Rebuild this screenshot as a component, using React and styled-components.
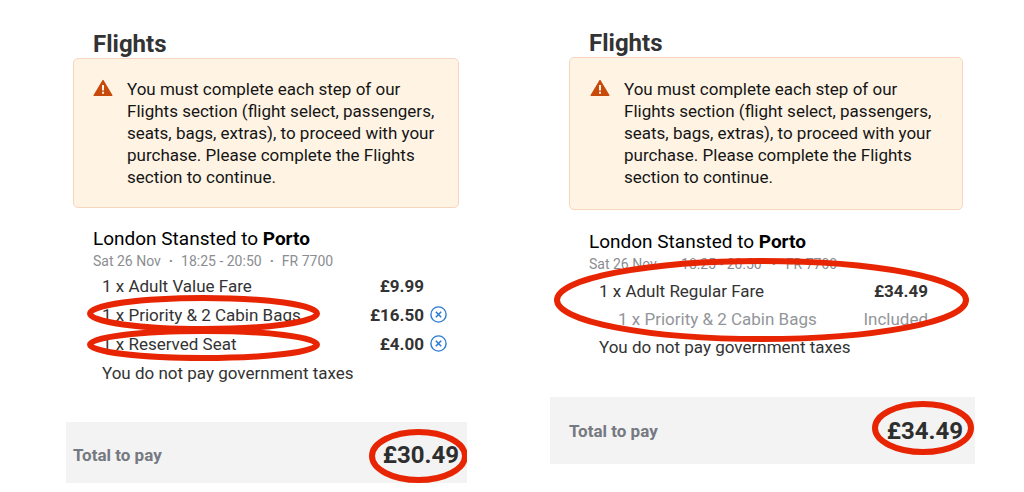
import React from "react";
import styled, { createGlobalStyle } from "styled-components";

const GlobalStyle = createGlobalStyle`
  * {
    box-sizing: border-box;
  }

  body {
    margin: 0;
    background: #ffffff;
    color: #2e2e2e;
    font-family: Roboto, "Liberation Sans", sans-serif;
    font-size: 17px;
  }
`;

const Page = styled.main`
  display: grid;
  grid-template-columns: 401fr 425fr;
  align-items: start;
  gap: 83px;
  padding: 30px 49px 8px 66px;
`;

const Panel = styled.section`
  display: flex;
  flex-direction: column;
`;

const Body = styled.div`
  padding: ${(props) => (props.$wide ? "0 12px 0 19px" : "0 8px 0 7px")};
`;

const Title = styled.h2`
  margin: 0;
  padding: 0 20px;
  font-size: 24px;
  line-height: ${(props) => (props.$wide ? "27px" : "28px")};
  font-weight: 700;
  color: #333333;
`;

const Notice = styled.div`
  display: flex;
  gap: 14px;
  padding: ${(props) => (props.$wide ? "20px 20px 21px 20px" : "19px")};
  border: 1px solid #f8d5bf;
  border-radius: 5px;
  background: #fff4e4;

  & svg {
    flex: none;
    margin-top: 1px;
  }

  & p {
    margin: 0;
    line-height: 22px;
    color: #151515;
  }
`;

const Trip = styled.div`
  padding: ${(props) => (props.$wide ? "20px 12px 0 20px" : "19px 12px 0 20px")};
`;

const Route = styled.h3`
  margin: 0;
  font-size: 19px;
  line-height: 24px;
  font-weight: 400;
  color: #000000;
`;

const Meta = styled.p`
  display: flex;
  gap: ${(props) => (props.$wide ? "10px" : "8px")};
  margin: 0;
  font-size: 14px;
  line-height: 20px;
  color: #8b8d91;
`;

const Items = styled.ul`
  position: relative;
  list-style: none;
  margin: 0;
  padding: ${(props) => (props.$wide ? "3px 0 0 10px" : "0 0 0 9px")};
`;

const Item = styled.li`
  position: relative;
  display: grid;
  grid-template-columns: 1fr auto 17px;
  align-items: center;
  column-gap: 6px;
  height: ${(props) => (props.$wide ? "28px" : "29px")};
  padding-left: ${(props) => (props.$nested ? "19px" : "0")};
  color: ${(props) => (props.$nested ? "#93959a" : "#333333")};
`;

const Price = styled.span`
  font-weight: ${(props) => (props.$muted ? 400 : 700)};
`;

const RemoveButton = styled.button`
  display: flex;
  padding: 0;
  border: none;
  background: none;
  color: #2a7bd3;
  cursor: pointer;
`;

const Footer = styled.div`
  display: flex;
  align-items: center;
  justify-content: space-between;
  position: relative;
  overflow: hidden;
  margin-top: ${(props) => (props.$wide ? "36px" : "35px")};
  height: ${(props) => (props.$wide ? "67px" : "61px")};
  padding: ${(props) => (props.$wide ? "0 12px 0 19px" : "4px 8px 0 7px")};
  background: #f3f3f3;
`;

const TotalLabel = styled.span`
  font-weight: 700;
  color: #757981;
`;

const Total = styled.strong`
  position: relative;
  font-size: 24px;
  line-height: 28px;
`;

// hand-drawn style marker that lies over the text
const Marker = styled.svg`
  position: absolute;
  top: ${(props) => props.$top}px;
  left: ${(props) => props.$left}px;
  width: ${(props) => props.$width}px;
  height: ${(props) => props.$height}px;
  overflow: visible;
  pointer-events: none;

  & ellipse {
    cx: 50%;
    cy: 50%;
    rx: calc(50% - 3px);
    ry: calc(50% - 3px);
    fill: none;
    stroke: #e82502;
    stroke-width: 6px;
  }
`;

const Ring = ({ top, left, width, height }) => (
  <Marker $top={top} $left={left} $width={width} $height={height} aria-hidden="true">
    <ellipse />
  </Marker>
);

const WarningIcon = () => (
  <svg width="20" height="18" viewBox="0 0 20 18" aria-hidden="true">
    <path d="M10 1.6 18.8 16.4H1.2Z" fill="#c84a0b" stroke="#c84a0b" strokeWidth="1.4" strokeLinejoin="round" />
    <path d="M9 6h2v5.4H9zM9 12.8h2v2H9z" fill="#fff4e4" />
  </svg>
);

const RemoveIcon = () => (
  <svg width="17" height="17" viewBox="0 0 17 17" fill="none" stroke="currentColor" aria-hidden="true">
    <circle cx="8.5" cy="8.5" r="7.6" strokeWidth="1.4" />
    <path d="M5.8 5.8l5.4 5.4M11.2 5.8l-5.4 5.4" strokeWidth="1.5" />
  </svg>
);

const valueItems = [
  { name: "1 x Adult Value Fare", price: "£9.99" },
  {
    name: "1 x Priority & 2 Cabin Bags",
    price: "£16.50",
    removable: true,
    ring: { top: -5, left: -15, width: 233, height: 37 },
  },
  {
    name: "1 x Reserved Seat",
    price: "£4.00",
    removable: true,
    ring: { top: -1, left: -15, width: 233, height: 33 },
  },
];

const regularItems = [
  { name: "1 x Adult Regular Fare", price: "£34.49" },
  { name: "1 x Priority & 2 Cabin Bags", price: "Included", nested: true },
];

const Summary = ({ items, total, wide, itemsRing, totalRing }) => (
  <Panel>
    <Body $wide={wide}>
      <Title $wide={wide}>Flights</Title>
      <Notice $wide={wide}>
        <WarningIcon />
        <p>
          You must complete each step of our Flights section (flight select,
          passengers, seats, bags, extras), to proceed with your purchase.
          Please complete the Flights section to continue.
        </p>
      </Notice>
      <Trip $wide={wide}>
        <Route>
          London Stansted to <b>Porto</b>
        </Route>
        <Meta $wide={wide}>
          <span>Sat 26 Nov</span>
          <b>·</b>
          <span>18:25 - 20:50</span>
          <b>·</b>
          <span>FR 7700</span>
        </Meta>
        <Items $wide={wide}>
          {items.map((item) => (
            <Item key={item.name} $wide={wide} $nested={item.nested}>
              <span>{item.name}</span>
              <Price $muted={item.nested}>{item.price}</Price>
              {item.removable && (
                <RemoveButton type="button" aria-label={`Remove ${item.name}`}>
                  <RemoveIcon />
                </RemoveButton>
              )}
              {item.ring && <Ring {...item.ring} />}
            </Item>
          ))}
          <Item $wide={wide}>
            <span>You do not pay government taxes</span>
          </Item>
          {itemsRing && <Ring {...itemsRing} />}
        </Items>
      </Trip>
    </Body>
    <Footer $wide={wide}>
      <TotalLabel>Total to pay</TotalLabel>
      <Total>
        {total}
        <Ring {...totalRing} />
      </Total>
    </Footer>
  </Panel>
);

const App = () => (
  <>
    <GlobalStyle />
    <Page>
      <Summary
        items={valueItems}
        total="£30.49"
        totalRing={{ top: -12, left: -14, width: 99, height: 54 }}
      />
      <Summary
        wide
        items={regularItems}
        total="£34.49"
        itemsRing={{ top: -16, left: -35, width: 415, height: 84 }}
        totalRing={{ top: -16, left: -15, width: 102, height: 54 }}
      />
    </Page>
  </>
);

export default App;
